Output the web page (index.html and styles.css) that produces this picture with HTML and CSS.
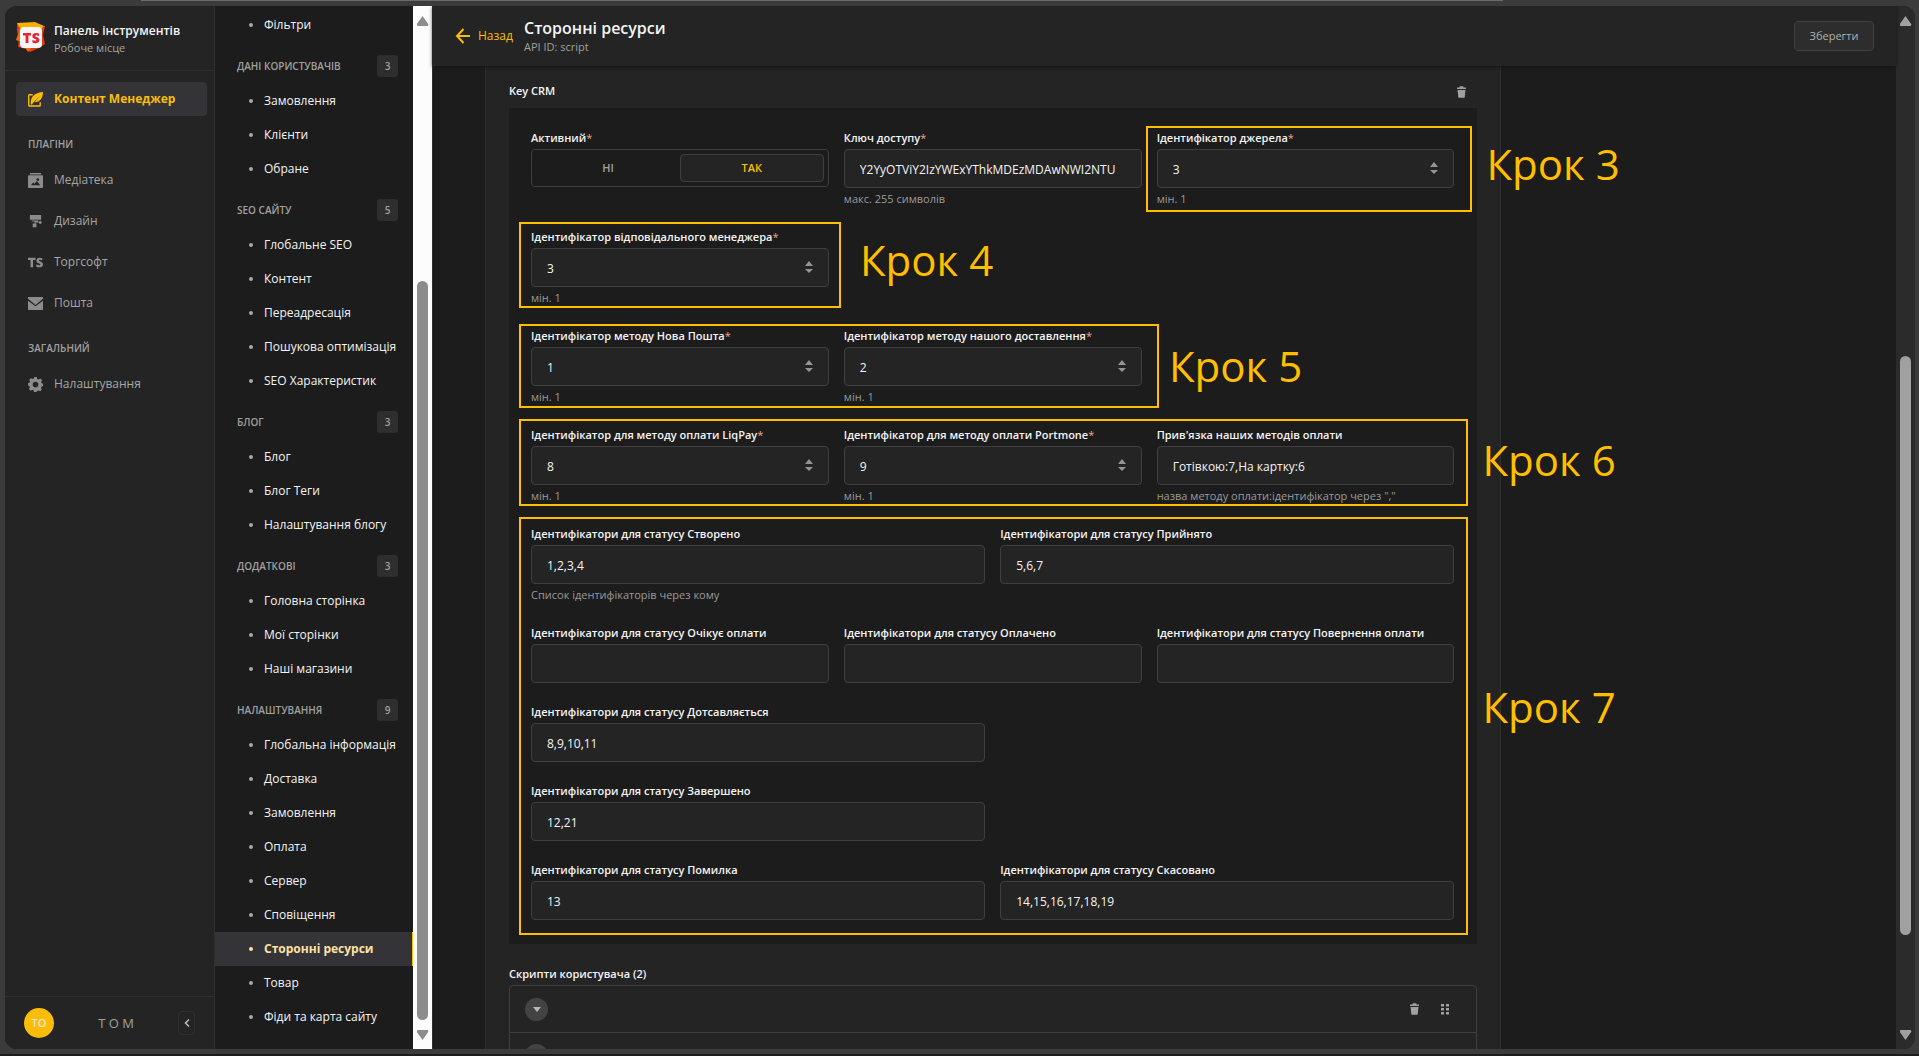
FILE: index.html
```html
<!DOCTYPE html>
<html lang="uk">
<head>
<meta charset="utf-8">
<title>Сторонні ресурси</title>
<link rel="stylesheet" href="styles.css">
</head>
<body>
<svg class="defs" width="0" height="0" aria-hidden="true">
  <symbol id="trash" viewBox="0 0 18 24"><path d="M.8 3h4.400V1.200c0-.5.4-.9.900-.9h5.800c.5 0 .9.400.9.900V3h4.400c.5 0 .8.300.8.800v2H0v-2c0-.5.3-.8.800-.8zM1 8h16l-1.600 14.400c0 .7-.6 1.100-1.200 1.100H3.800c-.6 0-1.100-.4-1.200-1.100z"/></symbol>
  <symbol id="spin" viewBox="0 0 8 14"><path d="M4 1l4 5H0zM4 13l4-4H0z"/></symbol>
</svg>
<div class="window">
  <nav class="side">
    <header class="brand">
      <svg width="30" height="30" viewBox="0 0 30 30" aria-hidden="true">
        <path fill="#e33a12" d="M1 1l9 2 19 1-2 9 2 9-6 4-9 4-4-3-8-2 1-9-2-7z"/>
        <path fill="#fbb000" d="M1 1l18-1 9 4-9 10L5 8z"/><path fill="#f26a10" d="M0 18l4-12 6 2-5 12zM8 24h9l-5 6z"/>
        <rect x="4" y="5" width="22" height="21" rx="4" fill="#f7f5f5"/>
        <path fill="#e3262f" d="M7 11h8v2.500h-2.600V21H9.600v-7.500H7zM23 11.500v2.400c-2-.7-3.800-.8-3.800.1 0 1.200 4.200.8 4.200 4 0 3.400-4.300 3.700-7 2.500v-2.600c2 1 4.100 1.100 4.100.2 0-1.300-4.200-.8-4.200-4 0-3.400 3.900-3.700 6.700-2.600z"/>
      </svg>
      <div><strong>Панель інструментів</strong><span>Робоче місце</span></div>
    </header>
    <div class="links">
      <a class="on" href="#"><svg viewBox="0 0 16 16"><path fill="none" stroke="currentColor" stroke-width="1.500" d="M5 3H1.500Q.8 3 .8 4v10q0 1 1 1H12q1 0 1-1v-3"/><path d="M3 13C2.500 7 5 1 16 0c0 6-3 11-9 11l6-7-7.500 7.500L4 13.500z"/></svg>Контент Менеджер</a>
      <h2>ПЛАГІНИ</h2>
      <a href="#"><svg viewBox="0 0 16 16"><path fill-rule="evenodd" d="M2 0h12v1.500H2zM1 2.500h14q1 0 1 1V15q0 1-1 1H1q-1 0-1-1V3.500q0-1 1-1zM3 13h10L9.500 8.500 7 11.500 5.500 10zM10.500 5.500a1.500 1.500 0 100 3 1.500 1.500 0 000-3z"/></svg>Медіатека</a>
      <a href="#"><svg viewBox="0 0 16 16"><path d="M2 1h12v5H2zM4 7h7v2H8v1h1v4H5v-4h2V8H4zM13 7l2 2-2 2-2-2z"/></svg>Дизайн</a>
      <a href="#"><svg viewBox="0 0 16 16"><path d="M0 3h8v2.200H5.400V13H2.700V5.200H0zM15.300 3.400v2.400c-2-.8-3.600-.9-3.600.1 0 1.300 4.300.9 4.300 4.100 0 3.500-4.500 3.700-7.100 2.500V9.900c2 1.100 4.300 1.300 4.300.2 0-1.300-4.300-.8-4.300-4 0-3.500 3.900-3.800 6.400-2.700z"/></svg>Торгсофт</a>
      <a href="#"><svg viewBox="0 0 16 16"><path d="M0 1h16v2L8 9.500 0 3zM0 5l8 6 8-6v9q0 1-1 1H1q-1 0-1-1z"/></svg>Пошта</a>
      <h2>ЗАГАЛЬНИЙ</h2>
      <a href="#"><svg viewBox="0 0 16 16"><path fill-rule="evenodd" d="M6.700 0h2.600l.5 2 1.600.7 1.800-1.100 1.800 1.900-1 1.700.6 1.500 1.400.5v2.500l-1.600.6-.6 1.500.9 1.700-1.800 1.800-1.800-.9-1.500.6-.6 1.500H6.600L6 14.300l-1.500-.6-1.700.9-1.800-1.800.9-1.800-.5-1.400L0 9.100V6.600L1.500 6l.6-1.500-.9-1.700L3 1.200l1.700.9L6.200 1.500zM8 5a3 3 0 100 6 3 3 0 000-6z"/></svg>Налаштування</a>
    </div>
    <footer class="user">
      <span class="avatar">TO</span><span class="name">T O M</span>
      <button aria-label="Згорнути"><svg width="6" height="10" viewBox="0 0 6 10"><path fill="none" stroke="#c0c0c0" stroke-width="1.500" d="M5 1.500L1.500 5 5 8.500"/></svg></button>
    </footer>
  </nav>
  <nav class="sub">
    <ul><li><a href="#">Фільтри</a></li></ul>
    <h2>ДАНІ КОРИСТУВАЧІВ<span>3</span></h2>
    <ul><li><a href="#">Замовлення</a></li><li><a href="#">Клієнти</a></li><li><a href="#">Обране</a></li></ul>
    <h2>SEO САЙТУ<span>5</span></h2>
    <ul><li><a href="#">Глобальне SEO</a></li><li><a href="#">Контент</a></li><li><a href="#">Переадресація</a></li><li><a href="#">Пошукова оптимізація</a></li><li><a href="#">SEO Характеристик</a></li></ul>
    <h2>БЛОГ<span>3</span></h2>
    <ul><li><a href="#">Блог</a></li><li><a href="#">Блог Теги</a></li><li><a href="#">Налаштування блогу</a></li></ul>
    <h2>ДОДАТКОВІ<span>3</span></h2>
    <ul><li><a href="#">Головна сторінка</a></li><li><a href="#">Мої сторінки</a></li><li><a href="#">Наші магазини</a></li></ul>
    <h2>НАЛАШТУВАННЯ<span>9</span></h2>
    <ul><li><a href="#">Глобальна інформація</a></li><li><a href="#">Доставка</a></li><li><a href="#">Замовлення</a></li><li><a href="#">Оплата</a></li><li><a href="#">Сервер</a></li><li><a href="#">Сповіщення</a></li><li><a class="on" href="#">Сторонні ресурси</a></li><li><a href="#">Товар</a></li><li><a href="#">Фіди та карта сайту</a></li></ul>
  </nav>
  <div class="bar light"><i class="up"></i><div class="track"><b></b></div><i class="down"></i></div>
  <main>
    <header class="top">
      <a href="#"><svg width="15" height="16" viewBox="0 0 15 16"><path fill="none" stroke="currentColor" stroke-width="2" d="M15 8H2M8.500 1L2 8l6.500 7"/></svg>Назад</a>
      <div class="title"><h1>Сторонні ресурси</h1><p>API ID: script</p></div>
      <button>Зберегти</button>
    </header>
    <div class="content">
      <section class="panel">
        <div class="head"><h3>Key CRM</h3><button class="icon" aria-label="Видалити"><svg width="9" height="12"><use href="#trash"/></svg></button></div>
        <form class="form">
          <fieldset class="field c4"><legend>Активний<em>*</em></legend>
            <div class="toggle"><label><input type="radio" name="active">НІ</label><label><input type="radio" name="active" checked>ТАК</label></div></fieldset>
          <div class="field c4"><label for="f1">Ключ доступу<em>*</em></label><input id="f1" value="Y2YyOTViY2IzYWExYThkMDEzMDAwNWI2NTU"><small>макс. 255 символів</small></div>
          <div class="field c4 num"><label for="f2">Ідентифікатор джерела<em>*</em></label><div><input id="f2" value="3"><svg><use href="#spin"/></svg></div><small>мін. 1</small></div>
          <div class="field c4 num"><label for="f3">Ідентифікатор відповідального менеджера<em>*</em></label><div><input id="f3" value="3"><svg><use href="#spin"/></svg></div><small>мін. 1</small></div>
          <div class="field c4 num first"><label for="f4">Ідентифікатор методу Нова Пошта<em>*</em></label><div><input id="f4" value="1"><svg><use href="#spin"/></svg></div><small>мін. 1</small></div>
          <div class="field c4 num"><label for="f5">Ідентифікатор методу нашого доставлення<em>*</em></label><div><input id="f5" value="2"><svg><use href="#spin"/></svg></div><small>мін. 1</small></div>
          <div class="field c4 num first"><label for="f6">Ідентифікатор для методу оплати LiqPay<em>*</em></label><div><input id="f6" value="8"><svg><use href="#spin"/></svg></div><small>мін. 1</small></div>
          <div class="field c4 num"><label for="f7">Ідентифікатор для методу оплати Portmone<em>*</em></label><div><input id="f7" value="9"><svg><use href="#spin"/></svg></div><small>мін. 1</small></div>
          <div class="field c4"><label for="f8">Прив'язка наших методів оплати</label><input id="f8" value="Готівкою:7,На картку:6"><small>назва методу оплати:ідентифікатор через ","</small></div>
          <div class="field c6"><label for="f9">Ідентифікатори для статусу Створено</label><input id="f9" value="1,2,3,4"><small>Список ідентифікаторів через кому</small></div>
          <div class="field c6"><label for="f10">Ідентифікатори для статусу Прийнято</label><input id="f10" value="5,6,7"></div>
          <div class="field c4"><label for="f11">Ідентифікатори для статусу Очікує оплати</label><input id="f11"></div>
          <div class="field c4"><label for="f12">Ідентифікатори для статусу Оплачено</label><input id="f12"></div>
          <div class="field c4"><label for="f13">Ідентифікатори для статусу Повернення оплати</label><input id="f13"></div>
          <div class="field c6"><label for="f14">Ідентифікатори для статусу Дотсавляється</label><input id="f14" value="8,9,10,11"></div>
          <div class="field c6 first"><label for="f15">Ідентифікатори для статусу Завершено</label><input id="f15" value="12,21"></div>
          <div class="field c6 first"><label for="f16">Ідентифікатори для статусу Помилка</label><input id="f16" value="13"></div>
          <div class="field c6"><label for="f17">Ідентифікатори для статусу Скасовано</label><input id="f17" value="14,15,16,17,18,19"></div>
          <div class="mark m3"><span>Крок 3</span></div>
          <div class="mark m4"><span>Крок 4</span></div>
          <div class="mark m5"><span>Крок 5</span></div>
          <div class="mark m6"><span>Крок 6</span></div>
          <div class="mark m7"><span>Крок 7</span></div>
        </form>
        <h3 class="scripts">Скрипти користувача (2)</h3>
        <ul class="list">
          <li><button class="round" aria-label="Розгорнути"><svg width="8" height="5" viewBox="0 0 8 5"><path d="M0 0h8L4 5z"/></svg></button><button class="icon" aria-label="Видалити"><svg width="9" height="12"><use href="#trash"/></svg></button><button class="icon" aria-label="Перемістити"><svg width="8" height="11" viewBox="0 0 8 11"><path d="M0 0h3v2.500H0zM5 0h3v2.500H5zM0 4h3v2.500H0zM5 4h3v2.500H5zM0 8h3v2.500H0zM5 8h3v2.500H5z"/></svg></button></li>
          <li><button class="round" aria-label="Розгорнути"><svg width="8" height="5" viewBox="0 0 8 5"><path d="M0 0h8L4 5z"/></svg></button></li>
        </ul>
      </section>
    </div>
  </main>
  <div class="bar dark"><i class="up"></i><div class="track"><b></b></div><i class="down"></i></div>
</div>
</body>
</html>
```
FILE: styles.css
```css
* { box-sizing: border-box; }
body {
  margin: 0;
  height: 100vh;
  overflow: hidden;
  padding: 6px 4px 7px 5px;
  background: linear-gradient(#6a6c6c, #6a6c6c) 141px 0 / 71% 1px no-repeat, linear-gradient(#1c1c1c, #1c1c1c) 0 100% / 100% 2px no-repeat, #3b3b3b;
  font: 12px/18px "Open Sans", "Noto Sans", sans-serif;
  color: #f4f4f4;
}
h1, h2, h3, p, ul { margin: 0; padding: 0; }
ul { list-style: none; }
a { color: inherit; text-decoration: none; }
button, input { font: inherit; color: inherit; }
svg { fill: currentColor; flex: none; }
.defs { position: absolute; }
.window { display: flex; height: 100%; overflow: hidden; border-radius: 12px; background: #1c1c1c; }

.side { display: flex; flex-direction: column; flex: none; width: 210px; background: #242424; border-right: 1px solid #2f2f2f; }
.brand { display: flex; gap: 8px; height: 65px; padding: 16px 11px 0; border-bottom: 1px solid #2f2f2f; }
.brand strong, .brand span { display: block; line-height: 17px; white-space: nowrap; }
.brand strong { font-weight: 600; }
.brand span { font-size: 11px; color: #a3a3a3; }
.links { flex: 1; padding: 11px 7px 0 11px; }
.links a { display: flex; align-items: center; gap: 11px; height: 34px; margin-bottom: 7px; padding: 0 12px; border-radius: 4px; color: #a6a6a6; }
.links svg { width: 15px; height: 15px; color: #8c8c8c; }
.links a.on { background: #343438; color: #fbbd08; font-weight: 700; }
.links a.on svg { color: #fbbd08; }
.links h2 { padding: 12px 12px 10px; font: 600 10px/18px "Open Sans", sans-serif; color: #a0a0a0; }
.user { display: flex; align-items: center; height: 53px; padding: 0 19px; border-top: 1px solid #2f2f2f; }
.avatar { width: 30px; height: 30px; border-radius: 50%; background: #fbbd08; color: #f0e6c8; font: 600 11px/30px "Open Sans", sans-serif; text-align: center; }
.name { flex: 1; text-align: center; color: #a0a0a0; font-size: 13px; }
.user button { display: grid; place-items: center; width: 17px; height: 24px; padding: 0; border: 1px solid #303030; border-radius: 4px; background: none; }

.sub { flex: none; width: 198px; padding-top: 2px; overflow: hidden; white-space: nowrap; font-weight: 500; }
.sub a { display: flex; align-items: center; gap: 11px; height: 34px; padding-left: 34px; }
.sub a::before { content: ""; width: 4px; height: 4px; border-radius: 50%; background: #a8a8a8; }
.sub a.on { background: #343438; border-right: 1px solid #fbbd08; color: #ffe1a0; font-weight: 700; }
.sub a.on::before { background: #ffe1a0; }
.sub h2 { display: flex; align-items: center; justify-content: space-between; height: 42px; padding: 5px 15px 0 22px; font: 600 10px/18px "Open Sans", sans-serif; color: #a0a0a0; }
.sub h2 span { width: 21px; border-radius: 3px; background: #2e2e2e; line-height: 22px; text-align: center; }

.bar { display: flex; flex-direction: column; align-items: center; flex: none; width: 19px; padding: 10px 0 9px; background: #fcfcfc; color: #8c8c8c; }
.bar .track { flex: 1; display: flex; width: 11px; padding: 255px 0 10px; }
.bar b { flex: 1; border-radius: 6px; background: currentColor; }
.bar i { width: 12px; height: 10px; background: currentColor; }
.up { clip-path: polygon(50% 0, 100% 85%, 92% 100%, 8% 100%, 0 85%); }
.down { clip-path: polygon(8% 0, 92% 0, 100% 15%, 50% 100%, 0 15%); }
.bar.dark { background: #2b2b2b; color: #a0a0a0; }
.bar.dark .track { padding: 330px 0 95px; }

main { flex: 1; min-width: 0; display: flex; flex-direction: column; border-left: 1px solid #303030; }
.top { position: relative; z-index: 1; display: flex; align-items: center; flex: none; height: 60px; padding: 0 22px; background: #242424; box-shadow: 0 1px 4px #141414; }
.top a { display: flex; align-items: center; gap: 8px; width: 69px; color: #fbbd08; }
.title { flex: 1; }
.top h1 { font-size: 16px; font-weight: 600; line-height: 22px; }
.top p { font-size: 11px; line-height: 16px; color: #a0a0a0; }
.top button { width: 80px; height: 30px; padding: 0; border: 1px solid #404040; border-radius: 4px; background: #2d2d2d; color: #b0b0b0; font-size: 11px; font-weight: 500; }
.content { flex: 1; min-height: 0; display: grid; grid-template-columns: repeat(12, 1fr); column-gap: 15px; padding: 0 52px; }
.panel { grid-column: span 9; height: max-content; padding: 16px 23px 20px 23px; background: #242424; border: solid #303030; border-width: 0 1px; }
h3 { font-size: 11px; font-weight: 600; line-height: 18px; }
.head { display: flex; justify-content: space-between; height: 26px; padding-right: 11px; }
.icon { display: flex; align-items: center; height: 20px; padding: 0; border: 0; background: none; color: #a0a0a0; }
.form { position: relative; display: grid; grid-template-columns: repeat(12, 1fr); gap: 21px 15px; padding: 22px 22px 24px; background: #1c1c1c; }
.field { display: flex; flex-direction: column; gap: 3px; min-width: 0; margin: 0; padding: 0; border: 0; }
.c4 { grid-column: span 4; }
.c6 { grid-column: span 6; }
.first.c4 { grid-column: 1 / span 4; }
.first.c6 { grid-column: 1 / span 6; }
.field > label, legend { padding: 0; font-size: 11px; font-weight: 600; line-height: 16px; white-space: nowrap; }
legend { margin-bottom: 3px; }
.field em { color: #f0a58c; font-style: normal; font-weight: 400; }
.field small { margin-bottom: 2px; font-size: 11px; line-height: 15px; color: #9a9a9a; white-space: nowrap; }
.field > input, .num input { width: 100%; height: 39px; padding: 1px 15px 0; border: 1px solid #3f3f3f; border-radius: 4px; background: #242424; outline: 0; font-weight: 500; }
.num div { position: relative; display: flex; }
.num svg { position: absolute; right: 16px; top: 12px; width: 8px; height: 14px; color: #949494; }
.toggle { display: flex; height: 38px; padding: 4px; border: 1px solid #3f3f3f; border-radius: 4px; }
.toggle label { flex: 1; display: grid; place-items: center; border: 1px solid transparent; border-radius: 4px; color: #a0a0a0; font-size: 11px; font-weight: 600; }
.toggle input { position: absolute; opacity: 0; }
.toggle label:has(:checked) { border-color: #3f3f3f; background: #242424; color: #fbbd08; }

.mark { position: absolute; left: 10px; border: 2px solid #ffbf00; pointer-events: none; }
.mark span { position: absolute; left: 100%; top: 8px; margin-left: 17px; font: 42px/56px "Open Sans", "Noto Sans", sans-serif; color: #ffbf00; white-space: nowrap; }
.m3 { left: auto; right: 5px; top: 18px; width: 326px; height: 86px; }
.m4 { top: 114px; width: 322px; height: 86px; }
.m4 span { margin-left: 21px; }
.m5 { top: 216px; width: 640px; height: 84px; }
.m5 span { top: 12px; margin-left: 12px; }
.m6 { top: 311px; right: 9px; height: 87px; }
.m6 span { top: 11px; }
.m7 { top: 409px; right: 9px; height: 418px; }
.m7 span { top: 160px; }
.scripts { padding: 21px 0 2px; }
.list { border: 1px solid #3f3f3f; border-radius: 4px; }
.list li { display: flex; align-items: center; gap: 22px; height: 46px; padding: 0 27px 0 15px; }
.list li + li { border-top: 1px solid #3f3f3f; }
.round { display: grid; place-items: center; width: 23px; height: 23px; margin-right: auto; padding: 0; border: 0; border-radius: 50%; background: #434343; color: #b8b8b8; }
```
